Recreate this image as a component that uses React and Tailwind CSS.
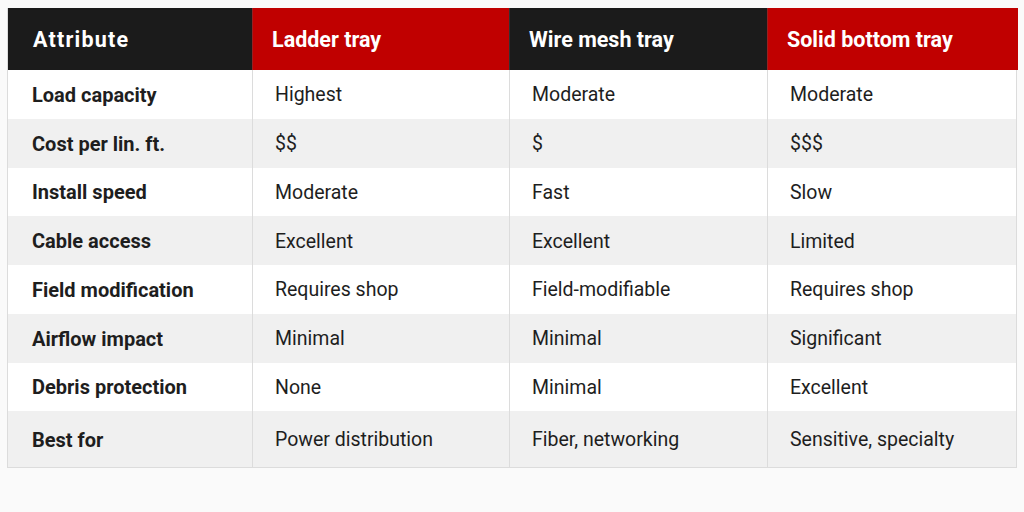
import React from "react";

const headers = [
  { t: "Attribute", bg: "bg-[#1b1b1b]" },
  { t: "Ladder tray", bg: "bg-[#c00000]" },
  { t: "Wire mesh tray", bg: "bg-[#1b1b1b]" },
  { t: "Solid bottom tray", bg: "bg-[#c00000]" },
];

const rows = [
  ["Load capacity", "Highest", "Moderate", "Moderate"],
  ["Cost per lin. ft.", "$$", "$", "$$$"],
  ["Install speed", "Moderate", "Fast", "Slow"],
  ["Cable access", "Excellent", "Excellent", "Limited"],
  ["Field modification", "Requires shop", "Field-modifiable", "Requires shop"],
  ["Airflow impact", "Minimal", "Minimal", "Significant"],
  ["Debris protection", "None", "Minimal", "Excellent"],
  ["Best for", "Power distribution", "Fiber, networking", "Sensitive, specialty"],
];

const cols = "grid grid-cols-[244px_257px_258px_251px]";

export default function App() {
  return (
    <div className="w-[1024px] h-[512px] bg-[#fafafa] pt-[8px] pl-[7px]" style={{ fontFamily: "Roboto, 'Liberation Sans', sans-serif" }}>
      <div className="w-[1010px] border-x border-b border-[#dcdcdc]">
        <div className={`${cols} h-[62px]`}>
          {headers.map((h, i) => (
            <div key={i} className={`${h.bg} flex items-center pt-[3px] text-white font-bold text-[21.5px] ${i === 0 ? "pl-[25px] tracking-[1.2px]" : "pl-[19px]"} ${i > 0 ? "border-l border-[#555]/40" : ""}`}>
              {h.t}
            </div>
          ))}
        </div>
        {rows.map((r, ri) => (
          <div key={ri} className={`${cols} ${ri === rows.length - 1 ? "h-[56px]" : "h-[48.75px]"} ${ri % 2 === 1 ? "bg-[#f0f0f0]" : "bg-white"}`}>
            {r.map((c, ci) => (
              <div key={ci} className={`flex items-center pt-[1px] text-[#1e1e1e] ${ci === 0 ? "font-bold text-[20px] pl-[24px]" : "text-[19.5px] pl-[22px] border-l border-[#dcdcdc]"}`}>
                {c}
              </div>
            ))}
          </div>
        ))}
      </div>
    </div>
  );
}
